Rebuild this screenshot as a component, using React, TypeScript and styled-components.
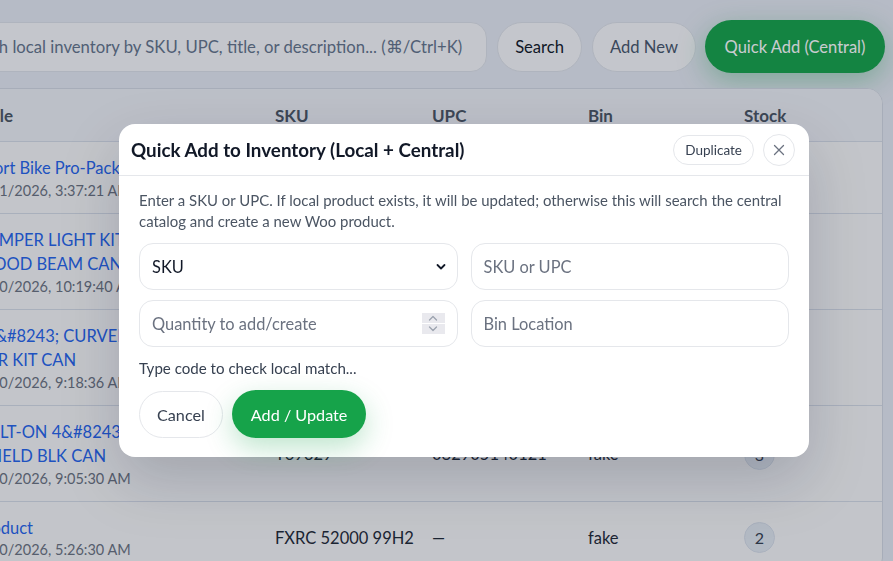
import React from "react";
import styled, { createGlobalStyle } from "styled-components";

const GlobalStyle = createGlobalStyle`
  * { box-sizing: border-box; }
  html, body { margin: 0; padding: 0; }
  body {
    font-family: Lato, "Segoe UI", sans-serif;
    background: #e6e9f2;
    overflow: hidden;
  }
`;

const Viewport = styled.div`
  width: 893px;
  height: 561px;
  overflow: hidden;
  background: #e6e9f2;
`;

const Page = styled.div`
  margin-left: -58px;
  width: 943px;
  padding-top: 20px;
  display: flex;
  flex-direction: column;
  gap: 15px;
`;

const Toolbar = styled.div`
  display: flex;
  align-items: center;
  gap: 10px;
`;

const SearchBox = styled.input`
  flex: 1;
  min-width: 0;
  height: 50px;
  border-radius: 16px;
  border: 1px solid #dde1e8;
  background: #f8f8fa;
  padding: 0 16px;
  font: inherit;
  font-size: 16.7px;
  color: #111827;
  outline: none;
  &::placeholder { color: #64748b; }
`;

const PillButton = styled.button<{ $tone?: "dark" | "muted" }>`
  height: 50px;
  padding: 0 17px;
  border-radius: 999px;
  border: 1px solid #dde1e8;
  background: #f8f8fa;
  font: inherit;
  font-size: 16.6px;
  color: ${(p) => (p.$tone === "muted" ? "#475569" : "#111827")};
`;

const PrimaryTop = styled.button`
  height: 53px;
  width: 180px;
  margin-left: -1px;
  border-radius: 999px;
  border: none;
  background: #16a34a;
  color: #ffffff;
  font: inherit;
  font-size: 16.5px;
  box-shadow: 0 8px 28px rgba(22, 163, 74, 0.35);
`;

const Card = styled.div`
  margin-right: 2px;
  background: #f7f7f8;
  border: 1px solid #d3d8e2;
  border-radius: 16px;
  overflow: hidden;
`;

const cols = "316px 157px 156px 156px 1fr";

const HeadRow = styled.div`
  display: grid;
  grid-template-columns: ${cols};
  height: 53px;
  align-items: center;
  background: #eef0f5;
  border-bottom: 1px solid #d5dbe6;
  font-weight: 700;
  font-size: 17px;
  color: #4b5563;
`;

const HeadCell = styled.div<{ $first?: boolean }>`
  padding-left: ${(p) => (p.$first ? "36px" : "16px")};
`;

const Row = styled.div`
  display: grid;
  grid-template-columns: ${cols};
  align-items: center;
  border-bottom: 1px solid #d5dbe6;
  padding: 14px 0 12px;
`;

const TitleCell = styled.div`
  padding-left: 33px;
  display: flex;
  flex-direction: column;
`;

const TitleLink = styled.a`
  color: #2563eb;
  font-size: 16.5px;
  line-height: 24.5px;
  white-space: pre-line;
  text-decoration: none;
`;

const DateText = styled.div`
  color: #6b7280;
  font-size: 14.5px;
  line-height: 20px;
`;

const Cell = styled.div`
  padding-left: 16px;
  font-size: 16.5px;
  color: #1f2937;
`;

const Badge = styled.span`
  display: inline-flex;
  align-items: center;
  justify-content: center;
  width: 31px;
  height: 31px;
  border-radius: 50%;
  background: #e2e8f0;
  border: 1px solid #d6dde8;
  color: #374151;
  font-size: 16px;
`;

const Backdrop = styled.div`
  position: fixed;
  inset: 0;
  background: rgba(15, 23, 42, 0.22);
  display: flex;
  justify-content: center;
  align-items: flex-start;
  padding: 124px 0 0 35px;
`;

const Modal = styled.div`
  width: 690px;
  background: #ffffff;
  border-radius: 16px;
  box-shadow: 0 24px 60px rgba(15, 23, 42, 0.18);
`;

const ModalHeader = styled.div`
  height: 52px;
  padding: 0 14px 0 12px;
  display: flex;
  align-items: center;
  justify-content: space-between;
  border-bottom: 1px solid #e5e7eb;
`;

const ModalTitle = styled.h2`
  margin: 0;
  font-size: 18.8px;
  font-weight: 700;
  color: #111827;
`;

const HeaderActions = styled.div`
  display: flex;
  align-items: center;
  gap: 9px;
`;

const SmallPill = styled.button`
  height: 30px;
  padding: 0 11px;
  border-radius: 999px;
  border: 1px solid #e5e7eb;
  background: #ffffff;
  font: inherit;
  font-size: 13.5px;
  color: #374151;
`;

const CloseButton = styled.button`
  width: 32px;
  height: 32px;
  border-radius: 50%;
  border: 1px solid #e5e7eb;
  background: #ffffff;
  display: flex;
  align-items: center;
  justify-content: center;
  padding: 0;
  color: #6b7280;
`;

const ModalBody = styled.div`
  padding: 14px 20px 19px;
  display: flex;
  flex-direction: column;
  gap: 11px;
`;

const Description = styled.p`
  margin: 0;
  font-size: 14.95px;
  line-height: 21px;
  color: #4b5563;
`;

const FieldGrid = styled.div`
  display: grid;
  grid-template-columns: 1fr 1fr;
  column-gap: 13px;
  row-gap: 10px;
`;

const FieldWrap = styled.div`
  position: relative;
`;

const fieldBase = `
  width: 100%;
  height: 47px;
  border-radius: 14px;
  border: 1px solid #e5e7eb;
  background: #ffffff;
  padding: 0 12px;
  font-family: inherit;
  font-size: 16.4px;
  color: #111827;
  outline: none;
`;

const TextField = styled.input`
  ${fieldBase}
  &::placeholder { color: #6b7280; }
`;

const SelectField = styled.select`
  ${fieldBase}
  appearance: none;
  -webkit-appearance: none;
`;

const Chevron = styled.svg`
  position: absolute;
  right: 11px;
  top: 19px;
  pointer-events: none;
`;

const Spinner = styled.div`
  position: absolute;
  right: 13px;
  top: 13px;
  width: 23px;
  height: 21px;
  display: flex;
  flex-direction: column;
  gap: 1px;
`;

const SpinHalf = styled.div`
  flex: 1;
  background: #e9e9ee;
  display: flex;
  align-items: center;
  justify-content: center;
`;

const Hint = styled.div`
  font-size: 15.1px;
  line-height: 20px;
  color: #374151;
`;

const ButtonRow = styled.div`
  display: flex;
  align-items: center;
  gap: 9px;
  margin-top: 1px;
`;

const CancelButton = styled.button`
  height: 47px;
  padding: 0 17px;
  border-radius: 999px;
  border: 1px solid #e5e7eb;
  background: #ffffff;
  font: inherit;
  font-size: 16.2px;
  color: #374151;
`;

const SubmitButton = styled.button`
  height: 48px;
  padding: 0 19px;
  border-radius: 999px;
  border: none;
  background: #16a34a;
  color: #ffffff;
  font: inherit;
  font-size: 16.2px;
  box-shadow: 0 10px 28px rgba(22, 163, 74, 0.28);
`;

type Item = { title: string; date: string; sku: string; upc: string; bin: string; stock: number };

const items: Item[] = [
  { title: "Sport Bike Pro-Pack Mount Kit", date: "1/31/2026, 3:37:21 AM", sku: "SBPP-100", upc: "—", bin: "fake", stock: 4 },
  { title: "BUMPER LIGHT KIT\nFLOOD BEAM CAN", date: "1/30/2026, 10:19:40 AM", sku: "T69331", upc: "082905140138", bin: "fake", stock: 2 },
  { title: "14&#8243; CURVED LIGHT\nBAR KIT CAN", date: "1/30/2026, 9:18:36 AM", sku: "T69330", upc: "082905140145", bin: "fake", stock: 1 },
  { title: "BOLT-ON 4&#8243; LIGHT\nSHIELD BLK CAN", date: "1/30/2026, 9:05:30 AM", sku: "T69329", upc: "082905140121", bin: "fake", stock: 3 },
  { title: "Product", date: "1/30/2026, 5:26:30 AM", sku: "FXRC 52000 99H2", upc: "—", bin: "fake", stock: 2 },
];

export default function App() {
  return (
    <>
      <GlobalStyle />
      <Viewport>
        <Page>
          <Toolbar>
            <SearchBox placeholder="Search local inventory by SKU, UPC, title, or description... (⌘/Ctrl+K)" />
            <PillButton>Search</PillButton>
            <PillButton $tone="muted">Add New</PillButton>
            <PrimaryTop>Quick Add (Central)</PrimaryTop>
          </Toolbar>
          <Card>
            <HeadRow>
              <HeadCell $first>Title</HeadCell>
              <HeadCell>SKU</HeadCell>
              <HeadCell>UPC</HeadCell>
              <HeadCell>Bin</HeadCell>
              <HeadCell>Stock</HeadCell>
            </HeadRow>
            {items.map((it) => (
              <Row key={it.date}>
                <TitleCell>
                  <TitleLink href="#">{it.title}</TitleLink>
                  <DateText>{it.date}</DateText>
                </TitleCell>
                <Cell>{it.sku}</Cell>
                <Cell>{it.upc}</Cell>
                <Cell>{it.bin}</Cell>
                <Cell>
                  <Badge>{it.stock}</Badge>
                </Cell>
              </Row>
            ))}
          </Card>
        </Page>
      </Viewport>
      <Backdrop>
        <Modal>
          <ModalHeader>
            <ModalTitle>Quick Add to Inventory (Local + Central)</ModalTitle>
            <HeaderActions>
              <SmallPill>Duplicate</SmallPill>
              <CloseButton aria-label="Close">
                <svg width="14" height="14" viewBox="0 0 14 14" fill="none" stroke="#6b7280" strokeWidth="1.3" strokeLinecap="round">
                  <path d="M2.5 2.5l9 9M11.5 2.5l-9 9" />
                </svg>
              </CloseButton>
            </HeaderActions>
          </ModalHeader>
          <ModalBody>
            <Description>
              Enter a SKU or UPC. If local product exists, it will be updated; otherwise this will search the central catalog and create a new Woo product.
            </Description>
            <FieldGrid>
              <FieldWrap>
                <SelectField defaultValue="sku">
                  <option value="sku">SKU</option>
                  <option value="upc">UPC</option>
                </SelectField>
                <Chevron width="12" height="10" viewBox="0 0 12 10" fill="none" stroke="#111827" strokeWidth="1.8" strokeLinecap="round" strokeLinejoin="round">
                  <path d="M2.5 3l3.5 3.5L9.5 3" />
                </Chevron>
              </FieldWrap>
              <TextField placeholder="SKU or UPC" />
              <FieldWrap>
                <TextField placeholder="Quantity to add/create" inputMode="numeric" />
                <Spinner>
                  <SpinHalf>
                    <svg width="10" height="6" viewBox="0 0 10 6" fill="none" stroke="#9ca3af" strokeWidth="1.3" strokeLinecap="round" strokeLinejoin="round">
                      <path d="M1.5 5L5 1.5 8.5 5" />
                    </svg>
                  </SpinHalf>
                  <SpinHalf>
                    <svg width="10" height="6" viewBox="0 0 10 6" fill="none" stroke="#9ca3af" strokeWidth="1.3" strokeLinecap="round" strokeLinejoin="round">
                      <path d="M1.5 1L5 4.5 8.5 1" />
                    </svg>
                  </SpinHalf>
                </Spinner>
              </FieldWrap>
              <TextField placeholder="Bin Location" />
            </FieldGrid>
            <Hint>Type code to check local match...</Hint>
            <ButtonRow>
              <CancelButton>Cancel</CancelButton>
              <SubmitButton>Add / Update</SubmitButton>
            </ButtonRow>
          </ModalBody>
        </Modal>
      </Backdrop>
    </>
  );
}
